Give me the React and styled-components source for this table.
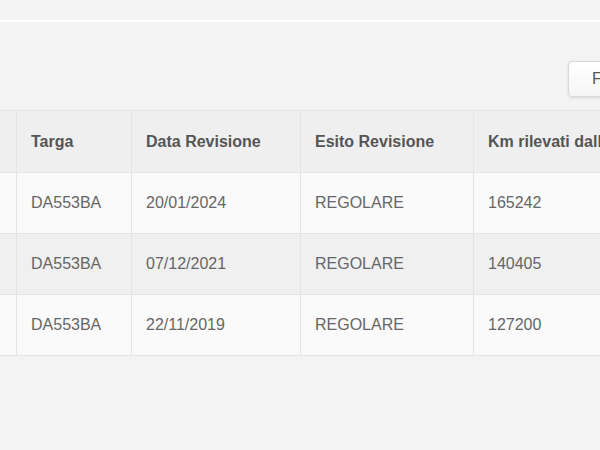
import React from 'react';
import styled, { createGlobalStyle } from 'styled-components';

const rows = [
  { targa: 'DA553BA', data: '20/01/2024', esito: 'REGOLARE', km: '165242' },
  { targa: 'DA553BA', data: '07/12/2021', esito: 'REGOLARE', km: '140405' },
  { targa: 'DA553BA', data: '22/11/2019', esito: 'REGOLARE', km: '127200' },
];

function App() {
  return (
    <>
      <GlobalStyle />
      <Page>
        <TopRule />
        <Toolbar>
          <FilterButton>Filtra</FilterButton>
        </Toolbar>
        <TableWrap>
          <Table>
            <colgroup>
              <col style={{ width: 100 }} />
              <col style={{ width: 115 }} />
              <col style={{ width: 169 }} />
              <col style={{ width: 173 }} />
              <col style={{ width: 220 }} />
            </colgroup>
            <thead>
              <tr>
                <Th>N.</Th>
                <Th>Targa</Th>
                <Th>Data Revisione</Th>
                <Th>Esito Revisione</Th>
                <Th>Km rilevati dalla revisione</Th>
              </tr>
            </thead>
            <tbody>
              {rows.map((r, i) => (
                <Row key={i} striped={i % 2 === 1}>
                  <Td>{i + 1}</Td>
                  <Td>{r.targa}</Td>
                  <Td>{r.data}</Td>
                  <Td>{r.esito}</Td>
                  <Td>{r.km}</Td>
                </Row>
              ))}
            </tbody>
          </Table>
        </TableWrap>
      </Page>
    </>
  );
}

export default App;

const GlobalStyle = createGlobalStyle`
  html, body {
    margin: 0;
    padding: 0;
    background: #f3f3f3;
    overflow: hidden;
  }
`;

const Page = styled.div`
  width: 600px;
  height: 450px;
  background: #f3f3f3;
  font-family: 'Liberation Sans', Arial, sans-serif;
  padding-top: 20px;
  box-sizing: border-box;
  overflow: hidden;
`;

const TopRule = styled.div`
  height: 2px;
  background: #ffffff;
`;

const Toolbar = styled.div`
  display: flex;
  justify-content: flex-end;
  padding-top: 39px;
  height: 88px;
  box-sizing: border-box;
  margin-right: -80px;
`;

const FilterButton = styled.button`
  width: 112px;
  height: 36px;
  padding: 0 0 0 23px;
  text-align: left;
  font-family: inherit;
  font-size: 16px;
  color: #555;
  background: linear-gradient(#ffffff, #f6f6f6);
  border: 1px solid #d8d8d8;
  border-radius: 4px;
  box-shadow: 0 1px 3px rgba(0, 0, 0, 0.1);
`;

const TableWrap = styled.div`
  overflow: hidden;
`;

const Table = styled.table`
  margin-left: -84px;
  border-collapse: collapse;
  table-layout: fixed;
  width: 777px;
  border-top: 1px solid #e6e6e6;
`;

const Th = styled.th`
  height: 61px;
  padding: 0 14px;
  text-align: left;
  font-size: 16px;
  font-weight: bold;
  color: #555;
  background: #efefef;
  border: 1px solid #e4e4e4;
  white-space: nowrap;
  overflow: hidden;
`;

const Row = styled.tr`
  background: ${({ striped }) => (striped ? '#f0f0f0' : '#fafafa')};
`;

const Td = styled.td`
  height: 60px;
  padding: 0 14px;
  font-size: 16px;
  color: #666;
  border: 1px solid #e4e4e4;
  white-space: nowrap;
`;
